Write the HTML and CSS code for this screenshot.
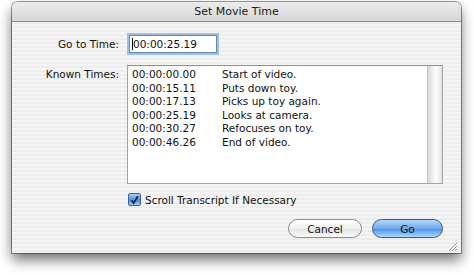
FILE: index.html
```html
<!DOCTYPE html>
<html lang="en">
<head>
    <meta charset="UTF-8">
    <title>Set Movie Time</title>
    <link rel="stylesheet" href="styles.css">
</head>
<body>
    <div class="window">
        <div class="titlebar">Set Movie Time</div>
        <div class="content">
            <div class="row goto">
                <div class="label">Go to Time:</div>
                <div class="field"><span class="caret"></span>00:00:25.19</div>
            </div>
            <div class="row known">
                <div class="label">Known Times:</div>
                <div class="list">
                    <div class="items">
                        <div class="item"><span class="time">00:00:00.00</span><span>Start of video.</span></div>
                        <div class="item"><span class="time">00:00:15.11</span><span>Puts down toy.</span></div>
                        <div class="item"><span class="time">00:00:17.13</span><span>Picks up toy again.</span></div>
                        <div class="item"><span class="time">00:00:25.19</span><span>Looks at camera.</span></div>
                        <div class="item"><span class="time">00:00:30.27</span><span>Refocuses on toy.</span></div>
                        <div class="item"><span class="time">00:00:46.26</span><span>End of video.</span></div>
                    </div>
                    <div class="scrollbar"></div>
                </div>
            </div>
            <div class="check-row">
                <span class="checkbox">
                    <svg width="13" height="13" viewBox="0 0 13 13">
                        <path d="M3 6.5 L5.5 9.5 L10.5 1.5" fill="none" stroke="#0d1f3a" stroke-width="2"/>
                    </svg>
                </span>
                <span>Scroll Transcript If Necessary</span>
            </div>
            <div class="buttons">
                <button class="btn cancel">Cancel</button>
                <button class="btn go">Go</button>
            </div>
        </div>
        <div class="grip">
            <svg width="11" height="11" viewBox="0 0 11 11">
                <path d="M10 2 L2 10 M10 5 L5 10 M10 8 L8 10" stroke="#9a9a9a" stroke-width="1"/>
                <path d="M10 3 L3 10 M10 6 L6 10 M10 9 L9 10" stroke="#fff" stroke-width="1"/>
            </svg>
        </div>
    </div>
</body>
</html>
```

FILE: styles.css
```css
body {
    margin: 0;
    padding: 0;
    height: 275px;
    background: #fff;
    font-family: "DejaVu Sans", Verdana, sans-serif;
    font-size: 10.5px;
    color: #111;
}

.window {
    position: relative;
    margin: 2px 0 0 12px;
    width: 449px;
    height: 251px;
    border-radius: 6px 6px 0 0;
    background: repeating-linear-gradient(#ededed 0 2px, #f5f5f5 2px 4px);
    box-shadow: 0 7px 13px rgba(0, 0, 0, 0.55), 0 0 0 1px #9d9d9d;
    display: flex;
    flex-direction: column;
}

.titlebar {
    height: 19px;
    line-height: 19px;
    text-align: center;
    font-size: 11px;
    color: #222;
    border-radius: 6px 6px 0 0;
    background: linear-gradient(#ececec, #d6d6d6);
    border-bottom: 1px solid #8c8c8c;
}

.content {
    padding: 12px 18px 15px 0;
    display: flex;
    flex-direction: column;
}

.row {
    display: flex;
    gap: 8px;
}

.label {
    width: 107px;
    text-align: right;
    flex-shrink: 0;
}

.goto {
    height: 20px;
    align-items: center;
    margin-bottom: 11px;
}

.field {
    width: 84px;
    height: 16px;
    line-height: 16px;
    margin-left: 2px;
    padding-left: 2px;
    background: #fff;
    border: 1px solid #6a86ad;
    box-shadow: 0 0 0 2px #9ec1ea;
}

.caret {
    display: inline-block;
    width: 1px;
    height: 12px;
    background: #000;
    vertical-align: -2px;
}

.known .label {
    padding-top: 3px;
}

.list {
    flex: 1;
    height: 117px;
    display: flex;
    background: #fff;
    border: 1px solid #a5a5a5;
    border-top-color: #8e8e8e;
}

.items {
    flex: 1;
    padding: 2px 0 0 4px;
}

.item {
    display: flex;
    height: 13.6px;
    line-height: 13.6px;
}

.time {
    width: 90px;
}

.scrollbar {
    width: 14px;
    border-left: 1px solid #c8c8c8;
    background: linear-gradient(90deg, #d8d8d8, #f4f4f4 40%, #fdfdfd 60%, #e2e2e2);
}

.check-row {
    margin: 9px 0 0 116px;
    height: 13px;
    display: flex;
    align-items: center;
    gap: 4px;
}

.checkbox {
    width: 13px;
    height: 13px;
    box-sizing: border-box;
    border: 1px solid #42618e;
    border-radius: 2px;
    background: linear-gradient(#a9cdf5, #5b97e0 50%, #3d80d8 51%, #9cd0f8);
    display: flex;
}

.buttons {
    margin-top: 13px;
    display: flex;
    justify-content: flex-end;
    gap: 10px;
}

.btn {
    height: 19px;
    padding: 0;
    font-family: inherit;
    font-size: 10.5px;
    color: #111;
    border-radius: 10px;
}

.cancel {
    width: 74px;
    border: 1px solid #8a8a8a;
    background: linear-gradient(#ffffff, #f0f0f0 50%, #e2e2e2 51%, #fafafa);
}

.go {
    width: 71px;
    border: 1px solid #2d5d9e;
    background: linear-gradient(#b6d6f8, #6ea8ec 50%, #4a8fe4 51%, #a6dcfc);
}

.grip {
    position: absolute;
    right: 3px;
    bottom: 1px;
    width: 11px;
    height: 11px;
}
```
